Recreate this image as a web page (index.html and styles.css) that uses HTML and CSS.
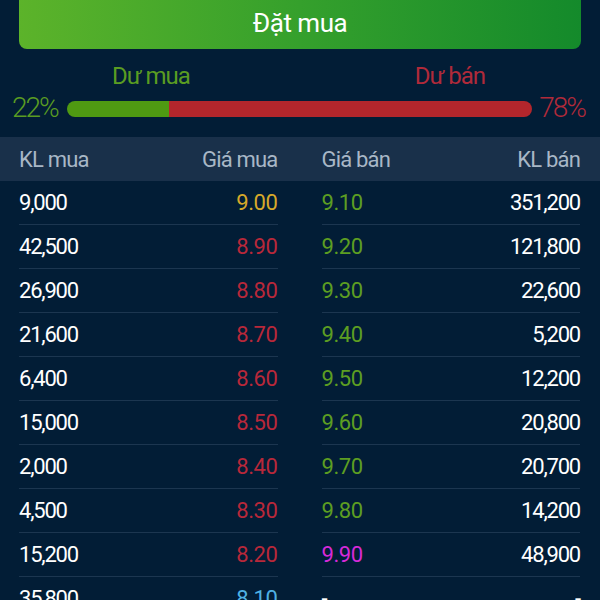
FILE: index.html
```html
<!DOCTYPE html>
<html lang="vi">
<head>
<meta charset="utf-8">
<link rel="stylesheet" href="styles.css">
</head>
<body>
<div class="top">
  <div class="btn">Đặt mua</div>
  <div class="labels"><span class="lbl-buy">Dư mua</span><span class="lbl-sell">Dư bán</span></div>
  <div class="ratio">
    <span class="pct buy">22%</span>
    <div class="bar"><div class="bar-buy" style="width:22%"></div><div class="bar-sell"></div></div>
    <span class="pct sell">78%</span>
  </div>
</div>
<div class="head">
  <div class="half"><span>KL mua</span><span>Giá mua</span></div>
  <div class="half"><span>Giá bán</span><span>KL bán</span></div>
</div>
<div class="rows">
  <div class="row"><div class="half"><span>9,000</span><span class="c-ref">9.00</span></div><div class="half"><span class="c-up">9.10</span><span>351,200</span></div></div>
  <div class="row"><div class="half"><span>42,500</span><span class="c-down">8.90</span></div><div class="half"><span class="c-up">9.20</span><span>121,800</span></div></div>
  <div class="row"><div class="half"><span>26,900</span><span class="c-down">8.80</span></div><div class="half"><span class="c-up">9.30</span><span>22,600</span></div></div>
  <div class="row"><div class="half"><span>21,600</span><span class="c-down">8.70</span></div><div class="half"><span class="c-up">9.40</span><span>5,200</span></div></div>
  <div class="row"><div class="half"><span>6,400</span><span class="c-down">8.60</span></div><div class="half"><span class="c-up">9.50</span><span>12,200</span></div></div>
  <div class="row"><div class="half"><span>15,000</span><span class="c-down">8.50</span></div><div class="half"><span class="c-up">9.60</span><span>20,800</span></div></div>
  <div class="row"><div class="half"><span>2,000</span><span class="c-down">8.40</span></div><div class="half"><span class="c-up">9.70</span><span>20,700</span></div></div>
  <div class="row"><div class="half"><span>4,500</span><span class="c-down">8.30</span></div><div class="half"><span class="c-up">9.80</span><span>14,200</span></div></div>
  <div class="row"><div class="half"><span>15,200</span><span class="c-down">8.20</span></div><div class="half"><span class="c-ceil">9.90</span><span>48,900</span></div></div>
  <div class="row"><div class="half"><span>35,800</span><span class="c-floor">8.10</span></div><div class="half"><span>-</span><span>-</span></div></div>
</div>
</body>
</html>
```
FILE: styles.css
```css
* { box-sizing: border-box; }
html, body { margin: 0; padding: 0; }
body {
  width: 600px;
  height: 600px;
  overflow: hidden;
  background: #021d36;
  font-family: Roboto, "Liberation Sans", sans-serif;
  color: #ffffff;
}
.top { padding: 0 0 14px; }
.btn {
  margin: 0 19px;
  height: 49px;
  border-radius: 0 0 8px 8px;
  background: linear-gradient(90deg, #5cb32a 0%, #35a02c 50%, #148a2b 100%);
  color: #fff;
  font-size: 26px;
  letter-spacing: -0.5px;
  display: flex;
  align-items: center;
  justify-content: center;
  padding-bottom: 3px;
}
.labels {
  display: flex;
  justify-content: space-between;
  padding: 13px 115px 0 112px;
  height: 44px;
  font-size: 24px;
  line-height: 28px;
  letter-spacing: -1px;
}
.lbl-buy { color: #5a9c22; }
.lbl-sell { color: #b02a3a; }
.ratio {
  display: grid;
  grid-template-columns: 67px 1fr 68px;
  align-items: center;
  height: 30px;
}
.pct { font-size: 28px; letter-spacing: -2px; font-weight: 300; line-height: 30px; }
.pct.buy { color: #5a9c22; padding-left: 12px; }
.pct.sell { color: #b02a3a; text-align: right; padding-right: 15px; }
.bar {
  height: 16px;
  border-radius: 8px;
  overflow: hidden;
  display: flex;
  margin-top: 2px;
}
.bar-buy { background: #4f9a12; height: 100%; }
.bar-sell { flex: 1; background: #b3262c; height: 100%; }
.head {
  display: flex;
  gap: 44px;
  padding: 0 20px 0 19px;
  height: 44px;
  background: #19304a;
  color: #a8b7c6;
  font-size: 22px;
  letter-spacing: -0.8px;
}
.head .half {
  flex: 1;
  display: flex;
  justify-content: space-between;
  align-items: center;
}
.rows { padding: 0 20px 0 19px; }
.row {
  display: flex;
  gap: 44px;
  height: 44px;
  font-size: 22px;
  letter-spacing: -1.2px;
}
.row .half {
  flex: 1;
  display: flex;
  justify-content: space-between;
  align-items: center;
  border-bottom: 1px solid #1c3650;
}
.c-ref, .c-down, .c-up, .c-ceil, .c-floor { letter-spacing: -0.4px; }
.c-ref { color: #d6a92a; }
.c-down { color: #b8283a; }
.c-up { color: #5d9e22; }
.c-ceil { color: #d62ad8; }
.c-floor { color: #4fb1e4; }
```
